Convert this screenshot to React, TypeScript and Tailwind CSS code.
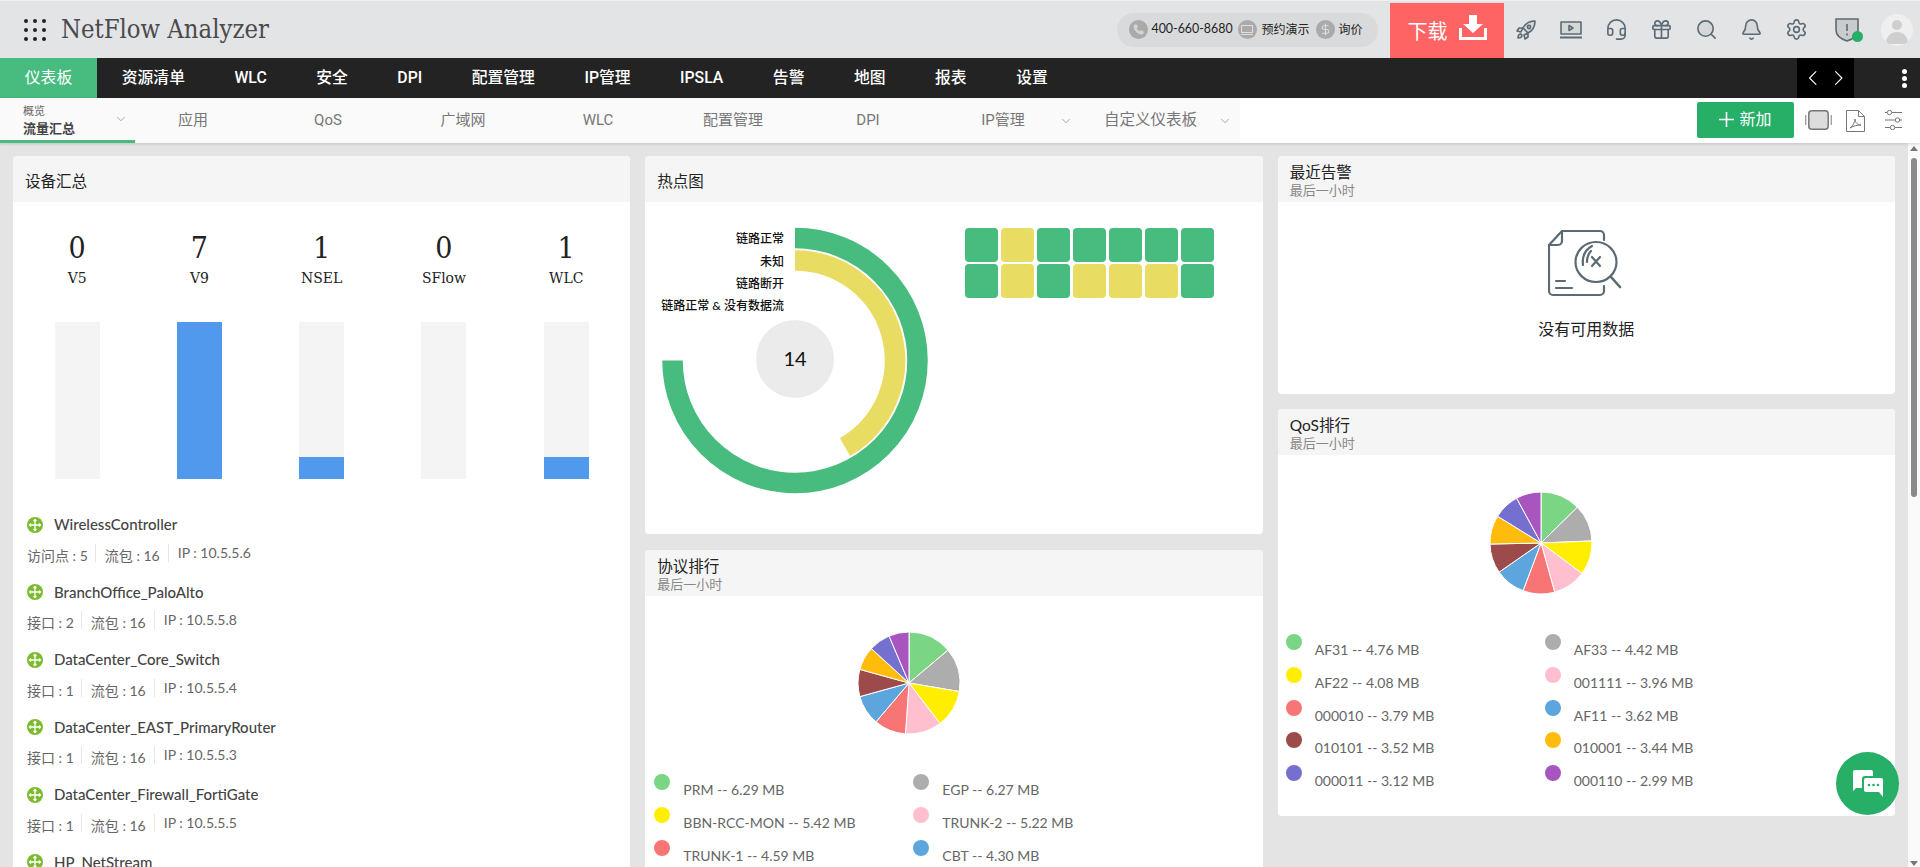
import { useMemo } from 'react';
import { Headset, Gift, Search, Bell, Settings, ChevronDown, ChevronLeft, ChevronRight, Phone, DollarSign } from 'lucide-react';

const GREEN = '#48bb7f';
const YELLOW = '#e9dc63';

const navItems = ['资源清单', 'WLC', '安全', 'DPI', '配置管理', 'IP管理', 'IPSLA', '告警', '地图', '报表', '设置'];
const subItems = ['应用', 'QoS', '广域网', 'WLC', '配置管理', 'DPI'];

const summary = [
  { count: 0, label: 'V5', fill: 0 },
  { count: 7, label: 'V9', fill: 157 },
  { count: 1, label: 'NSEL', fill: 22 },
  { count: 0, label: 'SFlow', fill: 0 },
  { count: 1, label: 'WLC', fill: 22 },
];

const devices = [
  { name: 'WirelessController', first: '访问点 : 5', ip: '10.5.5.6' },
  { name: 'BranchOffice_PaloAlto', first: '接口 : 2', ip: '10.5.5.8' },
  { name: 'DataCenter_Core_Switch', first: '接口 : 1', ip: '10.5.5.4' },
  { name: 'DataCenter_EAST_PrimaryRouter', first: '接口 : 1', ip: '10.5.5.3' },
  { name: 'DataCenter_Firewall_FortiGate', first: '接口 : 1', ip: '10.5.5.5' },
];

const pieColors = ['#7ad584', '#adadad', '#ffee00', '#ffbfcf', '#f77575', '#5ca6dd', '#9c4a4a', '#ffbc0c', '#7570cf', '#a955c0'];

const protocols = [
  { name: 'PRM', v: 6.29 },
  { name: 'EGP', v: 6.27 },
  { name: 'BBN-RCC-MON', v: 5.42 },
  { name: 'TRUNK-2', v: 5.22 },
  { name: 'TRUNK-1', v: 4.59 },
  { name: 'CBT', v: 4.3 },
  { name: 'IGP', v: 3.9 },
  { name: 'GRE', v: 3.4 },
  { name: 'ICMP', v: 3.1 },
  { name: 'TCP', v: 2.9 },
];

const qos = [
  { name: 'AF31', v: 4.76 },
  { name: 'AF33', v: 4.42 },
  { name: 'AF22', v: 4.08 },
  { name: '001111', v: 3.96 },
  { name: '000010', v: 3.79 },
  { name: 'AF11', v: 3.62 },
  { name: '010101', v: 3.52 },
  { name: '010001', v: 3.44 },
  { name: '000011', v: 3.12 },
  { name: '000110', v: 2.99 },
];

const polar = (cx: number, cy: number, r: number, deg: number) => {
  const a = ((deg - 90) * Math.PI) / 180;
  return [cx + r * Math.cos(a), cy + r * Math.sin(a)];
};

const arc = (cx: number, cy: number, r: number, from: number, to: number) => {
  const [x1, y1] = polar(cx, cy, r, from);
  const [x2, y2] = polar(cx, cy, r, to);
  return `M${x1} ${y1} A${r} ${r} 0 ${to - from > 180 ? 1 : 0} 1 ${x2} ${y2}`;
};

const Pie = ({ data }: { data: { v: number }[] }) => {
  const slices = useMemo(() => {
    const total = data.reduce((s, d) => s + d.v, 0);
    let at = 0;
    return data.map((d) => {
      const from = at;
      at += (d.v / total) * 360;
      return { from, to: at };
    });
  }, [data]);
  return (
    <svg width="104" height="104" viewBox="0 0 104 104">
      {slices.map((s, i) => (
        <path key={i} d={`M52 52 L${polar(52, 52, 51, s.from).join(' ')} ${arc(52, 52, 51, s.from, s.to).replace(/^M[^A]+/, '')} Z`} fill={pieColors[i]} stroke="#fff" strokeWidth="1" />
      ))}
    </svg>
  );
};

const Legend = ({ data, rows, className }: { data: { name: string; v: number }[]; rows: number; className: string }) => (
  <div className={`grid grid-cols-[259px_1fr] ${className}`}>
    {data.slice(0, rows * 2).map((d) => (
      <div key={d.name} className="flex h-[32.8px]">
        <span className="h-4 w-4 rounded-full" style={{ backgroundColor: pieColors[data.indexOf(d)] }} />
        <span className="ml-[13px] mt-[8px] whitespace-nowrap text-[14px] leading-4 text-[#666]">
          {d.name} -- {d.v.toFixed(2)} MB
        </span>
      </div>
    ))}
  </div>
);

const CardHead = ({ title, sub }: { title: string; sub?: boolean }) => (
  <div className="flex h-[46px] shrink-0 flex-col justify-center bg-[#f5f5f5] px-3 pt-1">
    <div className="text-[15.5px] leading-[18px] text-[#222]">{title}</div>
    {sub && <div className="text-[13px] leading-[18px] text-[#888]">最后一小时</div>}
  </div>
);

const DeviceIcon = () => (
  <svg width="16" height="16" viewBox="0 0 16 16" className="shrink-0">
    <circle cx="8" cy="8" r="8" fill="#7cba2f" />
    <path d="M8 2.5v11M2.5 8h11M6.500 4 8 2.500 9.500 4M6.500 12 8 13.500 9.500 12M4 6.500 2.500 8 4 9.500M12 6.500 13.500 8 12 9.500" fill="none" stroke="#fff" strokeWidth="1.3" />
  </svg>
);

const NoDataIcon = () => (
  <svg width="74" height="68" viewBox="0 0 74 68" fill="none" stroke="#5c6a74" strokeWidth="2.2" strokeLinecap="round" strokeLinejoin="round">
    <path d="M1 16V62a4 4 0 0 0 4 4h47a4 4 0 0 0 4-4v-5" />
    <path d="M1 16 14 2h38a4 4 0 0 1 4 4v5" />
    <path d="M14 2v10a4 4 0 0 1-4 4H1" />
    <ellipse cx="48" cy="33" rx="20.500" ry="20" />
    <path d="M63 48 72 58" strokeWidth="2.600" />
    <path d="M35 36c-1-8 2-15 9-19M39 33c0-4 1-8 4-11" />
    <path d="M44 28l8 9M52 28l-8 9" />
    <path d="M8 52h9M8 59h16" />
  </svg>
);

const ChatIcon = () => (
  <svg width="30" height="27" viewBox="0 0 30 27">
    <path d="M2 0h16a2 2 0 0 1 2 2v4h-8a3 3 0 0 0-3 3v9H3l-3 3V2a2 2 0 0 1 2-2z" fill="#fff" />
    <path d="M13 8h15a2 2 0 0 1 2 2v17l-4-5H13a2 2 0 0 1-2-2V10a2 2 0 0 1 2-2z" fill="#fff" />
    <circle cx="16" cy="15" r="1.300" fill="#27ae67" />
    <circle cx="20.500" cy="15" r="1.300" fill="#27ae67" />
    <circle cx="25" cy="15" r="1.300" fill="#27ae67" />
  </svg>
);

const RocketIcon = () => (
  <svg width="20" height="20" viewBox="0 0 20 20" fill="#d5d8d9" stroke="#5c6a74" strokeWidth="1.600" strokeLinejoin="round">
    <path d="M19 1c-6 0-10 3-12 7l5 5c4-2 7-6 7-12z" />
    <path d="M7 8H3L1 11l4 1zM12 13v4l-3 2-1-4z" />
    <path d="M5 14c-2 0-3 2-3 4 2 0 4-1 4-3z" />
    <circle cx="13" cy="7" r="1.600" fill="none" />
  </svg>
);

const TvIcon = () => (
  <svg width="22" height="18" viewBox="0 0 22 18" fill="none" stroke="#5c6a74" strokeWidth="1.600" strokeLinejoin="round">
    <rect x="1" y="1" width="20" height="12" fill="#d5d8d9" />
    <path d="M9 4.500v5l4-2.500z" />
    <path d="M0 16.500h22" strokeWidth="2" />
  </svg>
);

const App = () => {
  return (
    <div className="relative flex h-[867px] w-[1920px] flex-col overflow-hidden bg-[#e4e4e4] font-[Lato,'Noto_Sans_CJK_SC',sans-serif]">
      {/* Top bar */}
      <div className="flex h-[58px] shrink-0 items-center border-t border-[#f0f0f0] bg-[#e3e4e6]">
        <div className="ml-[24px] grid grid-cols-3 gap-x-[5px] gap-y-[5px]">
          {Array.from({ length: 9 }).map((_, i) => (
            <span key={i} className="h-1 w-1 rounded-full bg-[#222]" />
          ))}
        </div>
        <div className="ml-[15px] whitespace-nowrap font-['DejaVu_Serif_Condensed','DejaVu_Serif',serif] text-[25.4px] text-[#4a4a4a]">NetFlow Analyzer</div>

        <div className="ml-auto flex h-[34px] w-[261px] items-center rounded-full bg-[#d9dadb] pl-[12px] text-[12px] text-[#222]">
          <span className="flex h-[19px] w-[19px] items-center justify-center rounded-full bg-[#aaa]"><Phone size={11} color="#d5d5d5" fill="#d5d5d5" /></span>
          <span className="ml-[4px] text-[12.4px]">400-660-8680</span>
          <span className="ml-[5px] flex h-[19px] w-[19px] items-center justify-center rounded-full bg-[#aaa]">
            <svg width="12" height="10" viewBox="0 0 12 10" fill="none" stroke="#ddd"><rect x="0.500" y="0.500" width="11" height="7" /><path d="M0 9.500h12" /></svg>
          </span>
          <span className="ml-[5px]">预约演示</span>
          <span className="ml-[6px] flex h-[19px] w-[19px] items-center justify-center rounded-full bg-[#aaa]"><DollarSign size={13} color="#ddd" /></span>
          <span className="ml-[4px]">询价</span>
        </div>

        <div className="ml-[12px] mt-[2px] flex h-[56px] w-[114px] items-center bg-[#ff6464] pl-[18px] text-white">
          <span className="text-[20px]">下载</span>
          <svg width="28" height="25" viewBox="0 0 28 25" className="mb-[6px] ml-[11px]" fill="#fff">
            <path d="M10 0h8v9h6L14 18 4 9h6z" />
            <path d="M1.500 13v10.500h25V13" fill="none" stroke="#fff" strokeWidth="3" />
          </svg>
        </div>

        <div className="flex items-center text-[#5c6a74]">
          <span className="flex w-[45px] justify-center"><RocketIcon /></span>
          <span className="flex w-[45px] justify-center"><TvIcon /></span>
          <span className="flex w-[45px] justify-center"><Headset size={23} strokeWidth={1.7} /></span>
          <span className="flex w-[45px] justify-center"><Gift size={23} strokeWidth={1.7} /></span>
          <span className="flex w-[45px] justify-center"><Search size={23} strokeWidth={1.7} fill="#d5d8d9" /></span>
          <span className="flex w-[45px] justify-center"><Bell size={23} strokeWidth={1.7} fill="#d5d8d9" /></span>
          <span className="flex w-[45px] justify-center"><Settings size={23} strokeWidth={1.7} /></span>
          <span className="relative ml-[16.5px] flex w-6 justify-center">
            <svg width="24" height="25" viewBox="0 0 24 25" fill="#c9cbcc" stroke="#5c6a74" strokeWidth="1.600">
              <path d="M1 2h22v11c0 5-5 9-11 11C6 22 1 18 1 13z" />
              <path d="M12 7v7M12 16.500v2" fill="none" />
            </svg>
            <span className="absolute left-[17px] top-[14px] h-[11px] w-[11px] rounded-full bg-[#27ae67]" />
          </span>
        </div>
        <div className="ml-[22px] mr-[7px] flex h-8 w-8 items-center justify-center overflow-hidden rounded-full bg-[#efefef]">
          <svg width="32" height="32" viewBox="0 0 32 32">
            <circle cx="16" cy="11" r="5" fill="#cfcfcf" />
            <path d="M5 30c0-8 5-12 11-12s11 4 11 12z" fill="#cfcfcf" />
          </svg>
        </div>
      </div>

      {/* Main nav */}
      <div className="flex h-10 shrink-0 items-center bg-[#232323] font-[Roboto,'Noto_Sans_CJK_SC',sans-serif] text-[15.8px] text-white">
        <div className="flex h-full w-[97px] items-center justify-center text-white" style={{ backgroundColor: GREEN }}>仪表板</div>
        {navItems.map((item) => (
          <div key={item} className="whitespace-nowrap px-[24.75px] font-medium">{item}</div>
        ))}
        <div className="ml-auto flex h-full w-[57px] items-center justify-between bg-black px-[3px]">
          <ChevronLeft size={26} strokeWidth={1} />
          <ChevronRight size={26} strokeWidth={1} />
        </div>
        <div className="ml-[48px] mr-[13px] flex flex-col gap-[2px]">
          <span className="h-[5px] w-[5px] rounded-full bg-white" />
          <span className="h-[5px] w-[5px] rounded-full bg-white" />
          <span className="h-[5px] w-[5px] rounded-full bg-white" />
        </div>
      </div>

      {/* Sub nav */}
      <div className="z-10 flex h-[45px] shrink-0 items-center bg-white font-[Roboto,'Noto_Sans_CJK_SC',sans-serif] shadow-[0_1px_3px_rgba(0,0,0,0.15)]">
        <div className="flex h-full items-center bg-[#fafafa] text-[15px] text-[#777]">
          <div className="relative flex h-full w-[135px] flex-col border-b-[3px] border-[#48bb7f] pl-[23px]">
            <span className="mt-[7px] text-[11px] leading-[13px] text-[#666]">概览</span>
            <span className="mt-[2px] text-[13px] font-bold leading-[17px] text-[#444]">流量汇总</span>
            <ChevronDown size={14} strokeWidth={1.2} className="absolute left-[114px] top-[14px] text-[#888]" />
          </div>
          {subItems.map((item) => (
            <div key={item} className="w-[135px] pr-[19px] text-center">{item}</div>
          ))}
          <div className="flex w-[135px] items-center">
            <span className="w-[116px] text-center">IP管理</span>
            <ChevronDown size={14} strokeWidth={1.2} className="ml-[-2px] text-[#888]" />
          </div>
          <div className="flex items-center pl-[24px] pr-[8px]">
            <span className="w-[93px] whitespace-nowrap text-[15.5px]">自定义仪表板</span>
            <ChevronDown size={14} strokeWidth={1.2} className="ml-[21px] text-[#888]" />
          </div>
        </div>
        <div className="mb-[2px] ml-auto flex h-9 w-[97px] items-center justify-center gap-[5px] rounded-[2px] bg-[#27ae67] text-[16px] text-white">
          <svg width="15" height="15" viewBox="0 0 15 15" stroke="#fff" strokeWidth="1.600"><path d="M7.500 0v15M0 7.500h15" /></svg>
          <span>新加</span>
        </div>
        <div className="mb-[1px] ml-[11px] flex">
          <svg width="27" height="20" viewBox="0 0 27 20" fill="none" stroke="#777" strokeWidth="1.500">
            <rect x="3.800" y="0.800" width="19.400" height="18.400" rx="3" fill="#ddd" />
            <path d="M0.800 5v10M26.200 5v10" strokeWidth="1" />
          </svg>
        </div>
        <div className="ml-[14px] flex">
          <svg width="19" height="22" viewBox="0 0 19 22" fill="none" stroke="#777" strokeWidth="1">
            <path d="M0.500 0.500h12l6 6v15h-18z" />
            <path d="M12.500 0.500v6h6" />
            <path d="M4 18c3-2 5-6 5-9 0 3 2 6 6 6-4 0-8 1-11 3z" />
          </svg>
        </div>
        <div className="mb-[1px] ml-[20px] mr-[18px] flex">
          <svg width="17" height="20" viewBox="0 0 17 20" fill="none" stroke="#777" strokeWidth="1">
            <path d="M0 2.500h2M7 2.500h10M0 10h10M15 10h2M0 17.500h5M10 17.500h7" />
            <circle cx="4.500" cy="2.500" r="2.200" />
            <circle cx="12.500" cy="10" r="2.200" />
            <circle cx="7.500" cy="17.500" r="2.200" />
          </svg>
        </div>
      </div>

      {/* Content */}
      <div className="flex min-h-0 flex-1">
        <div className="grid flex-1 grid-cols-3 items-start gap-x-[15px] overflow-hidden px-[13px] pt-[13px]">
          {/* Device summary */}
          <div className="overflow-hidden rounded-[4px] bg-white">
            <CardHead title="设备汇总" />
            <div className="grid grid-cols-5 px-[3px] pt-[29px]">
              {summary.map((s) => (
                <div key={s.label} className="flex flex-col items-center text-[#222]">
                  <div className="font-['DejaVu_Serif_Condensed','DejaVu_Serif',serif] text-[30px] leading-[34px]">{s.count}</div>
                  <div className="mt-[3px] font-['DejaVu_Serif_Condensed','DejaVu_Serif',serif] text-[15.5px] leading-5">{s.label}</div>
                  <div className="mt-[34px] flex h-[157px] w-[45px] flex-col justify-end bg-[#f4f4f4]">
                    <div className="w-full bg-[#5099ec]" style={{ height: s.fill }} />
                  </div>
                </div>
              ))}
            </div>
            <div className="pl-[14px] pt-[35.5px]">
              {devices.map((d) => (
                <div key={d.name} className="h-[67.5px]">
                  <div className="flex h-5 items-center gap-[11px] text-[15px] font-medium text-[#444]">
                    <DeviceIcon />
                    <span>{d.name}</span>
                  </div>
                  <div className="mt-[9px] flex h-[18px] text-[14px] text-[#666]">
                    <span className="border-r border-[#e6e6e6] pr-[7px] leading-[24px]">{d.first}</span>
                    <span className="border-r border-[#e6e6e6] pl-[9px] pr-[8px] leading-[24px]">流包 : 16</span>
                    <span className="pl-[9px] leading-[18px]">IP : {d.ip}</span>
                  </div>
                </div>
              ))}
              <div className="flex h-5 items-center gap-[11px] text-[15px] font-medium text-[#444]">
                <DeviceIcon />
                <span>HP_NetStream</span>
              </div>
            </div>
          </div>

          {/* Middle column */}
          <div className="flex flex-col gap-4">
            <div className="h-[378px] overflow-hidden rounded-[4px] bg-white">
              <CardHead title="热点图" />
              <div className="flex">
                <svg width="320" height="332" viewBox="0 0 320 332" className="shrink-0">
                  <path d={arc(150, 158.500, 122.500, 0, 270)} fill="none" stroke={GREEN} strokeWidth="20.500" />
                  <path d={arc(150, 158.500, 100, 0, 150)} fill="none" stroke={YELLOW} strokeWidth="20.500" />
                  <circle cx="150" cy="157" r="39" fill="#ebebeb" />
                  <text x="150" y="164" textAnchor="middle" fontSize="20" fill="#111">14</text>
                  <g fontSize="12" fontWeight="500" fill="#111" textAnchor="end">
                    <text x="139" y="41">链路正常</text>
                    <text x="139" y="64">未知</text>
                    <text x="139" y="86">链路断开</text>
                    <text x="139" y="108">链路正常 &amp; 没有数据流</text>
                  </g>
                </svg>
                <div className="mt-[26px] grid h-[69.500px] grid-cols-[repeat(7,33px)] gap-x-[3px] gap-y-[2.500px]">
                  {'GYGGGGGGYGYYYG'.split('').map((c, i) => (
                    <span key={i} className="h-[33.500px] rounded-[4px]" style={{ backgroundColor: c === 'G' ? GREEN : YELLOW }} />
                  ))}
                </div>
              </div>
            </div>
            <div className="h-[400px] overflow-hidden rounded-[4px] bg-white">
              <CardHead title="协议排行" sub />
              <div className="flex justify-center pb-[39px] pr-[89px] pt-[35px]"><Pie data={protocols} /></div>
              <Legend data={protocols} rows={3} className="pl-[9px]" />
            </div>
          </div>

          {/* Right column */}
          <div className="flex flex-col gap-[15px]">
            <div className="h-[238px] overflow-hidden rounded-[4px] bg-white">
              <CardHead title="最近告警" sub />
              <div className="flex flex-col items-center pt-[27px]">
                <div className="ml-[-2px]"><NoDataIcon /></div>
                <div className="mt-[21px] text-[16px] leading-[22px] text-[#222]">没有可用数据</div>
              </div>
            </div>
            <div className="h-[407px] overflow-hidden rounded-[4px] bg-white">
              <CardHead title="QoS排行" sub />
              <div className="flex justify-center pb-[39px] pr-[90px] pt-[36px]"><Pie data={qos} /></div>
              <Legend data={qos} rows={5} className="pl-[8px]" />
            </div>
          </div>
        </div>

        {/* Scrollbar */}
        <div className="flex w-[12px] shrink-0 flex-col items-center bg-[#fafafa] pt-[3px]">
          <span className="h-0 w-0 border-x-[4px] border-b-[5px] border-x-transparent border-b-[#777]" />
          <span className="mt-[7px] h-[339px] w-[6px] rounded-full bg-[#8a8a8a]" />
          <span className="mb-[1px] mt-auto h-0 w-0 border-x-[4px] border-t-[5px] border-x-transparent border-t-[#777]" />
        </div>
      </div>

      {/* Chat */}
      <div className="absolute left-[1836px] top-[752px] flex h-[63px] w-[63px] items-center justify-center rounded-full bg-[#27ae67]">
        <ChatIcon />
      </div>
    </div>
  );
};

export default App;
